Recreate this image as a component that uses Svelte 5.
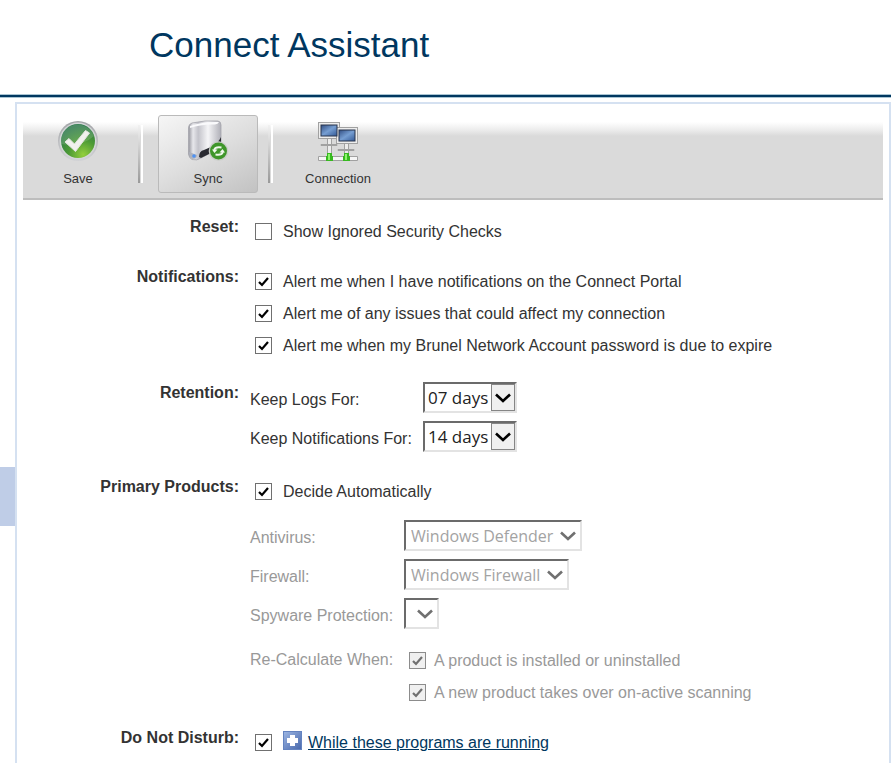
<script>
    let resetIgnored = $state(false);
    let notifications = $state([
        { label: 'Alert me when I have notifications on the Connect Portal', on: true },
        { label: 'Alert me of any issues that could affect my connection', on: true },
        { label: 'Alert me when my Brunel Network Account password is due to expire', on: true }
    ]);
    const retention = [
        { id: 'logs', label: 'Keep Logs For:', value: '07 days' },
        { id: 'notes', label: 'Keep Notifications For:', value: '14 days' }
    ];
    let automatic = $state(true);
    const products = [
        { id: 'antivirus', label: 'Antivirus:', value: 'Windows Defender' },
        { id: 'firewall', label: 'Firewall:', value: 'Windows Firewall' },
        { id: 'spyware', label: 'Spyware Protection:', value: '' }
    ];
    let triggers = $state([
        { label: 'A product is installed or uninstalled', on: true },
        { label: 'A new product takes over on-active scanning', on: true }
    ]);
    let quiet = $state(true);
</script>

{#snippet dropdown(item, disabled)}
    <span class="dropdown" class:disabled>
        <select id={item.id} {disabled}>
            <option>{item.value}</option>
        </select>
        <span class="arrow">
            <svg width="16" height="10" viewBox="0 0 16 10"><path d="M1 1.5 L8 8 L15 1.5" fill="none" stroke="currentColor" stroke-width="2.6" /></svg>
        </span>
    </span>
{/snippet}

<div class="page">
    <header>
        <h1>Connect Assistant</h1>
    </header>

    <div class="body">
        <aside><div class="marker"></div></aside>

        <main>
            <nav>
                <button type="button">
                    <svg width="42" height="42" viewBox="0 0 42 42">
                        <defs>
                            <linearGradient id="rim" x1="0" y1="0" x2="0" y2="1">
                                <stop offset="0" stop-color="#a2a4a7" />
                                <stop offset="1" stop-color="#d2d3d6" />
                            </linearGradient>
                            <radialGradient id="green" cx=".65" cy=".9" r=".85">
                                <stop offset="0" stop-color="#93cf3c" />
                                <stop offset=".5" stop-color="#4c9a35" />
                                <stop offset="1" stop-color="#2f7a4c" />
                            </radialGradient>
                        </defs>
                        <circle cx="21" cy="21" r="20" fill="url(#rim)" />
                        <circle cx="21" cy="21" r="18.5" fill="#d4d6d8" />
                        <circle cx="21" cy="21" r="17" fill="url(#green)" />
                        <path d="M4 20 A17 17 0 0 1 37 16 Q25 27 4 24Z" fill="#fff" opacity=".14" />
                        <path d="M8 22 L12 18.5 L17.5 24 L28.5 10.5 L32.5 13 L18.5 31.5 Z" fill="#f1f1ee" stroke="#e2e4df" stroke-width="1" stroke-linejoin="round" />
                    </svg>
                    <span>Save</span>
                </button>
                <i></i>
                <button type="button" class="active">
                    <svg width="42" height="42" viewBox="0 0 42 42">
                        <defs>
                            <linearGradient id="metal">
                                <stop offset="0" stop-color="#94949c" />
                                <stop offset=".14" stop-color="#e7e7eb" />
                                <stop offset=".3" stop-color="#c3c3ca" />
                                <stop offset=".6" stop-color="#f5f5f7" />
                                <stop offset="1" stop-color="#b0b0b8" />
                            </linearGradient>
                        </defs>
                        <path d="M1.500 8 Q1.500 4 5 3 Q18 0 31 1 Q34 1.500 34 5 V24 Q33 28 29 30 L14 38 Q10 41 5 39.500 Q2 38 1.500 34Z" fill="url(#metal)" stroke="#a4a5ac" stroke-width=".8" />
                        <path d="M3 6 Q16 1.500 32 2 Q31 4 28 4.500 Q14 4 3 8Z" fill="#fafafc" />
                        <path d="M12 37 Q12 31 17 30 L26 26 Q32 22 34 17 V25 Q33 29 28 31 L14 38Z" fill="#292a31" />
                        <path d="M2 32 L10 35 Q10 39 5 39 Q2 37 2 32Z" fill="#aeb2bd" />
                        <circle cx="7" cy="36" r="1.8" fill="#4d91f4" />
                        <circle cx="31.500" cy="31" r="9.800" fill="#c9cdc8" />
                        <circle cx="31.500" cy="31" r="8.500" fill="#3f962a" />
                        <path d="M27.500 31 Q26.500 26.500 34.500 27.500 M35.500 31 Q36.500 35.500 28.500 34.500" fill="none" stroke="#f0f8ec" stroke-width="1.900" />
                        <path d="M25 29.500 H30.500 L27.500 33Z M38 32.500 H32.500 L35.500 29Z" fill="#f0f8ec" />
                    </svg>
                    <span>Sync</span>
                </button>
                <i></i>
                <button type="button">
                    <svg width="42" height="42" viewBox="0 0 42 42">
                        <defs>
                            <linearGradient id="screen" x1="0" y1="0" x2="1" y2="1">
                                <stop offset="0" stop-color="#314e83" />
                                <stop offset=".5" stop-color="#769ed2" />
                                <stop offset="1" stop-color="#325997" />
                            </linearGradient>
                        </defs>
                        <g stroke="#a1a1a1">
                            <path d="M1.500 36.500 H40.500 V40.500 H1.500Z" fill="#f6f6f6" />
                            <path d="M10.500 18 H14.500 V35 H10.500Z M27.500 23 H31.500 V35 H27.500Z" fill="#ececec" />
                            <path d="M4 24.500 H20 V25.500 H4Z M21 29.500 H37 V30.500 H21Z" fill="#ddd" />
                            <rect x="1.500" y="2.500" width="21" height="16" fill="#ededed" />
                            <rect x="19.500" y="7.500" width="21" height="16" fill="#ededed" />
                        </g>
                        <rect x="4" y="5" width="16" height="11" fill="url(#screen)" stroke="#28354d" />
                        <rect x="22" y="10" width="16" height="11" fill="url(#screen)" stroke="#28354d" />
                        <path d="M10 33 H15 V36 H16 V41 H9 V36 H10Z M27 33 H32 V36 H33 V41 H26 V36 H27Z" fill="#37b91f" />
                        <path d="M11 34 H13 V40 H11Z M28 34 H30 V40 H28Z" fill="#8cf46c" />
                    </svg>
                    <span>Connection</span>
                </button>
            </nav>

            <form>
                <section>
                    <h2>Reset:</h2>
                    <div>
                        <label class="check"><input type="checkbox" bind:checked={resetIgnored} />Show Ignored Security Checks</label>
                    </div>
                </section>

                <section>
                    <h2>Notifications:</h2>
                    <div>
                        {#each notifications as item}
                            <label class="check"><input type="checkbox" bind:checked={item.on} />{item.label}</label>
                        {/each}
                    </div>
                </section>

                <section class="retention">
                    <h2>Retention:</h2>
                    <div>
                        {#each retention as item}
                            <div class="field">
                                <label for={item.id}>{item.label}</label>
                                {@render dropdown(item, false)}
                            </div>
                        {/each}
                    </div>
                </section>

                <section>
                    <h2>Primary Products:</h2>
                    <div>
                        <label class="check"><input type="checkbox" bind:checked={automatic} />Decide Automatically</label>
                        <div class="products" class:off={automatic}>
                            {#each products as item}
                                <div class="field">
                                    <label for={item.id}>{item.label}</label>
                                    {@render dropdown(item, automatic)}
                                </div>
                            {/each}
                            <div class="field triggers">
                                <span>Re-Calculate When:</span>
                                <div>
                                    {#each triggers as item}
                                        <label class="check"><input type="checkbox" bind:checked={item.on} disabled={automatic} />{item.label}</label>
                                    {/each}
                                </div>
                            </div>
                        </div>
                    </div>
                </section>

                <section>
                    <h2>Do Not Disturb:</h2>
                    <div class="check">
                        <input type="checkbox" aria-label="Do Not Disturb" bind:checked={quiet} />
                        <a href="#programs">
                            <svg width="19" height="19" viewBox="0 0 19 19">
                                <defs>
                                    <linearGradient id="plus" x1="0" y1="0" x2="1" y2="1">
                                        <stop offset="0" stop-color="#9db6e3" />
                                        <stop offset="1" stop-color="#4767ab" />
                                    </linearGradient>
                                </defs>
                                <rect x=".5" y=".5" width="18" height="18" fill="url(#plus)" stroke="#6483c0" />
                                <path d="M7 4 H12 V7 H15 V12 H12 V15 H7 V12 H4 V7 H7Z" fill="#fff" />
                            </svg>
                            <span>While these programs are running</span>
                        </a>
                    </div>
                </section>
            </form>
        </main>
    </div>
</div>

<style>
    :global(body) {
        margin: 0;
        background: #fff;
    }
    .page {
        display: flex;
        flex-direction: column;
        min-height: 100vh;
        padding-right: 5px;
        box-sizing: border-box;
        font: 16px/20px "Liberation Sans", Arial, sans-serif;
        color: #333;
    }
    header {
        padding: 24px 0 30px 149px;
        border-bottom: 2px solid #003760;
        box-shadow: 0 1px #a9c4d2, inset 0 -1px #a9c4d2;
    }
    h1 {
        margin: 0;
        font-size: 35px;
        line-height: 41px;
        font-weight: normal;
        color: #003760;
    }
    .body {
        display: flex;
        flex: 1;
        padding-top: 5px;
    }
    aside {
        width: 15px;
        padding-top: 365px;
        box-sizing: border-box;
    }
    .marker {
        height: 59px;
        background: #bfcde7;
    }
    main {
        flex: 1;
        padding: 6px;
        border: 2px solid #d5e1f1;
        border-bottom: none;
    }
    nav {
        display: flex;
        gap: 10px;
        padding: 5px;
        border-bottom: 2px solid #bdbdbd;
        background: linear-gradient(#fff 12px, #ececec 20px, #dadada 26px);
    }
    nav i {
        width: 2px;
        height: 58px;
        margin: 10px 8px 0 0;
        background: linear-gradient(#f2f2f2, #999);
        box-shadow: 3px 0 #fff;
    }
    nav button {
        display: flex;
        flex-direction: column;
        align-items: center;
        gap: 8px;
        width: 100px;
        height: 78px;
        padding: 4px 0 0;
        border: 1px solid transparent;
        border-radius: 3px;
        background: none;
        font: 13px/18px "Liberation Sans", Arial, sans-serif;
        color: #333;
    }
    nav button.active {
        border-color: #bababa;
        background: linear-gradient(150deg, #f6f6f6, #dedede 50%, #c2c2c2);
    }
    form {
        padding-top: 16px;
    }
    section {
        display: grid;
        grid-template-columns: 216px 1fr;
        gap: 11px;
        margin-bottom: 18px;
    }
    section.retention {
        margin: 20px 0 16px;
    }
    h2 {
        margin: 0;
        font-size: 16px;
        line-height: 22px;
        text-align: right;
    }
    .check {
        display: flex;
        align-items: center;
        gap: 11px;
        height: 32px;
        padding-left: 5px;
    }
    input {
        appearance: none;
        width: 17px;
        height: 17px;
        margin: 0 0 2px;
        border: 1px solid #707070;
        background: #fff;
    }
    input:checked {
        background: #fff url("data:image/svg+xml,%3Csvg xmlns='http://www.w3.org/2000/svg' viewBox='0 0 15 15'%3E%3Cpath d='M3 8 L6 11 L12 4' fill='none' stroke='%23000' stroke-width='2.200'/%3E%3C/svg%3E");
    }
    input:disabled {
        border-color: #8c8c8c;
        background-color: #f0f0f0;
        background-image: url("data:image/svg+xml,%3Csvg xmlns='http://www.w3.org/2000/svg' viewBox='0 0 15 15'%3E%3Cpath d='M3 8 L6 11 L12 4' fill='none' stroke='%23707070' stroke-width='2.200'/%3E%3C/svg%3E");
    }
    .field {
        display: grid;
        grid-template-columns: 173px 1fr;
        align-items: center;
        margin-bottom: 8px;
    }
    .field > label {
        padding-top: 4px;
    }
    .dropdown {
        position: relative;
        justify-self: start;
    }
    select {
        display: block;
        appearance: none;
        height: 31px;
        padding: 0 26px 0 3px;
        border: 2px solid;
        border-color: #6b6b6b #e3e3e3 #e3e3e3 #6b6b6b;
        border-radius: 0;
        background: #fff;
        font: 17px/24px "Open Sans", "Noto Sans", sans-serif;
        color: #222;
    }
    .arrow {
        position: absolute;
        inset: 2px 2px 2px auto;
        display: flex;
        align-items: center;
        justify-content: center;
        width: 24px;
        box-sizing: border-box;
        border: 1px solid #858585;
        background: #f0f0f0;
        color: #000;
        pointer-events: none;
    }
    .disabled select {
        padding-left: 5px;
        font-size: 16px;
        color: #a3a3a3;
        opacity: 1;
    }
    .disabled .arrow {
        border: none;
        background: none;
        color: #707070;
    }
    .off {
        color: #999;
    }
    .products {
        padding-top: 12px;
    }
    .products .field {
        grid-template-columns: 154px 1fr;
    }
    .products .check {
        gap: 8px;
    }
    .products .triggers {
        align-items: start;
        margin: 16px 0 0;
    }
    .triggers span {
        padding-top: 5px;
    }
    a {
        display: flex;
        align-items: center;
        gap: 6px;
        color: #003760;
    }
    a svg {
        margin-bottom: 6px;
    }
</style>
